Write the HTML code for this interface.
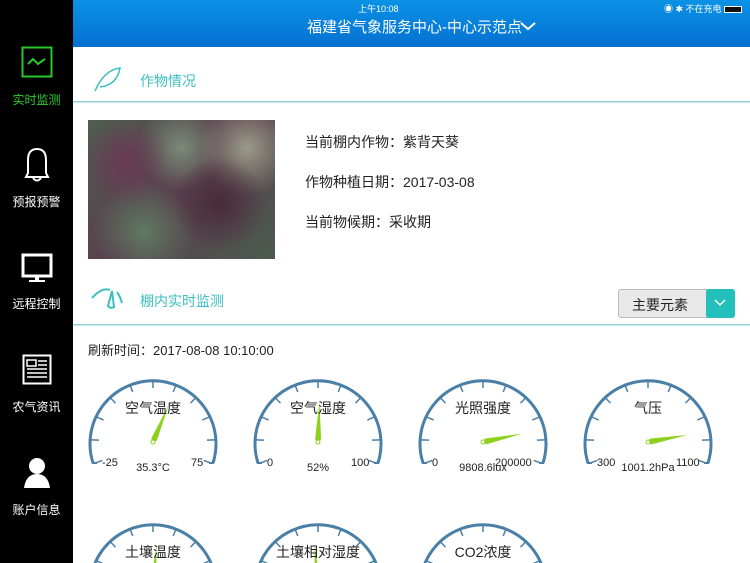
<!DOCTYPE html>
<html><head><meta charset="utf-8"><style>
*{margin:0;padding:0;box-sizing:border-box}
html,body{width:750px;height:563px;overflow:hidden}
body{background:#fff;font-family:"Liberation Sans","Noto Sans CJK SC",sans-serif;position:relative}
.side{position:absolute;left:0;top:0;width:73px;height:563px;background:#000}
.lab{position:absolute;left:0;width:73px;text-align:center;font-size:12px;color:#fff}
.hdr{position:absolute;left:73px;top:0;width:677px;height:47px;background:linear-gradient(#0a92e4,#0570d2)}
.t{position:absolute;white-space:nowrap}
</style></head><body>
<div class="side">
<svg width="73" height="563" style="position:absolute;left:0;top:0">
<rect x="22.5" y="47.5" width="29" height="29" fill="none" stroke="#28c828" stroke-width="2"/>
<path d="M28 64 L33 59 L38 64 L45 59" fill="none" stroke="#28c828" stroke-width="2"/>
<path d="M26 177 L28 173 L28 160 Q28 149 37 149 Q46 149 46 160 L46 173 L48 177 Z" fill="none" stroke="#fff" stroke-width="2"/>
<path d="M33 178 Q37 183 41 178" fill="none" stroke="#fff" stroke-width="2"/>
<rect x="23" y="255" width="28" height="21" fill="none" stroke="#fff" stroke-width="3"/>
<rect x="35" y="276" width="4" height="4" fill="#fff"/><rect x="29" y="280" width="16" height="2" fill="#fff"/>
<rect x="23.5" y="355.5" width="27" height="28" fill="none" stroke="#fff" stroke-width="2"/>
<rect x="27" y="360" width="9" height="6" fill="none" stroke="#fff" stroke-width="1.5"/>
<path d="M38 361H47M38 365H47M27 369H47M27 373H47M27 377H47" stroke="#fff" stroke-width="1.5"/>
<circle cx="37" cy="466" r="8" fill="#fff"/><path d="M24 488 Q26 474 37 474 Q48 474 50 488 Z" fill="#fff"/>
</svg>
<div class="lab" style="top:91px;color:#2bd02b">实时监测</div>
<div class="lab" style="top:193px">预报预警</div>
<div class="lab" style="top:295px">远程控制</div>
<div class="lab" style="top:398px">农气资讯</div>
<div class="lab" style="top:501px">账户信息</div>
</div>
<div class="hdr">
<div class="t" style="left:285px;top:2px;font-size:9px;color:#fff">上午10:08</div>
<div class="t" style="left:591px;top:2px;font-size:9px;color:#fff">◉ ✱ 不在充电 <span style="display:inline-block;width:18px;height:7px;background:#111;border:1px solid #fff;vertical-align:middle"></span></div>
<div class="t" style="left:234px;top:16px;font-size:15px;color:#fff">福建省气象服务中心-中心示范点</div>
<svg style="position:absolute;left:446px;top:20px" width="18" height="12"><path d="M2 3 L9 9 L16 3" fill="none" stroke="#fff" stroke-width="2"/></svg>
</div>
<svg width="750" height="563" style="position:absolute;left:0;top:0">
<path d="M95 91 Q104 70 120 68 Q117 85 100 87" fill="none" stroke="#3cbfc0" stroke-width="1.5"/>
<path d="M92 298 Q102 287 110 290 M112 291 L114 307 Q110 309 108 306 Z M117 292 Q120 296 122 303" fill="none" stroke="#3cbfc0" stroke-width="2"/>
<rect x="73" y="101" width="677" height="1.5" fill="#8fd3d8"/>
<rect x="73" y="324" width="677" height="1.5" fill="#8fd3d8"/>
</svg>
<div class="t" style="left:140px;top:71px;font-size:14px;color:#3cbfc0">作物情况</div>
<div class="t" style="left:140px;top:291px;font-size:14px;color:#3cbfc0">棚内实时监测</div>
<div style="position:absolute;left:88px;top:120px;width:187px;height:139px;background:
radial-gradient(circle at 20% 30%,#6a3a55 0,transparent 25%),radial-gradient(circle at 70% 60%,#4a2a3a 0,transparent 30%),radial-gradient(circle at 50% 20%,#7a8a78 0,transparent 30%),radial-gradient(circle at 30% 80%,#5e7a62 0,transparent 30%),radial-gradient(circle at 85% 20%,#9a9a88 0,transparent 25%),linear-gradient(135deg,#4e5e50,#5a3e4e 50%,#4a5c4e)"></div>
<div class="t" style="left:305px;top:132px;font-size:14px;color:#222">当前棚内作物：紫背天葵</div>
<div class="t" style="left:305px;top:172px;font-size:14px;color:#222">作物种植日期：2017-03-08</div>
<div class="t" style="left:305px;top:212px;font-size:14px;color:#222">当前物候期：采收期</div>
<div style="position:absolute;left:618px;top:289px;width:117px;height:29px;border:1px solid #bbb;border-radius:3px;background:#e8e8e8"></div>
<div class="t" style="left:632px;top:295px;font-size:14px;color:#222">主要元素</div>
<div style="position:absolute;left:706px;top:289px;width:29px;height:29px;background:#22bfbb;border-radius:3px"></div>
<svg style="position:absolute;left:713px;top:298px" width="14" height="10"><path d="M2 2 L7 7 L12 2" fill="none" stroke="#fff" stroke-width="1.5"/></svg>
<div class="t" style="left:88px;top:340px;font-size:13px;color:#222">刷新时间：2017-08-08 10:10:00</div>
<svg width="750" height="563" style="position:absolute;left:0;top:0" font-family="Liberation Sans, Noto Sans CJK SC, sans-serif">
<defs>
<g id="dial">
<path d="M-60 21 A63 63 0 1 1 60 21" fill="none" stroke="#4a7fa8" stroke-width="3"/>
<path d="M-61 21 h5 M61 21 h-5" stroke="#4a7fa8" stroke-width="2"/>
<g stroke="#4a7fa8" stroke-width="1.5">
<line x1="54" y1="0" x2="62" y2="0" transform="rotate(-200)"/>
<line x1="54" y1="0" x2="62" y2="0" transform="rotate(-178)"/>
<line x1="54" y1="0" x2="62" y2="0" transform="rotate(-156)"/>
<line x1="54" y1="0" x2="62" y2="0" transform="rotate(-134)"/>
<line x1="54" y1="0" x2="62" y2="0" transform="rotate(-112)"/>
<line x1="54" y1="0" x2="62" y2="0" transform="rotate(-90)"/>
<line x1="54" y1="0" x2="62" y2="0" transform="rotate(-68)"/>
<line x1="54" y1="0" x2="62" y2="0" transform="rotate(-46)"/>
<line x1="54" y1="0" x2="62" y2="0" transform="rotate(-24)"/>
<line x1="54" y1="0" x2="62" y2="0" transform="rotate(-2)"/>
<line x1="54" y1="0" x2="62" y2="0" transform="rotate(20)"/>
</g></g>
<g id="needle"><path d="M-2 0 L3 -3 L40 0 L3 3 Z" fill="#8ed01e"/><circle r="2" fill="#fff" stroke="#8ed01e"/></g>
</defs>
<g font-size="11" fill="#222">
<g transform="translate(153,442)"><use href="#dial"/><use href="#needle" transform="rotate(-67)"/>
<text y="-29" text-anchor="middle" font-size="14">空气温度</text><text x="-51" y="24">-25</text><text x="38" y="24">75</text><text y="29" text-anchor="middle">35.3°C</text></g>
<g transform="translate(318,442)"><use href="#dial"/><use href="#needle" transform="rotate(-88)"/>
<text y="-29" text-anchor="middle" font-size="14">空气湿度</text><text x="-51" y="24">0</text><text x="33" y="24">100</text><text y="29" text-anchor="middle">52%</text></g>
<g transform="translate(483,442)"><use href="#dial"/><use href="#needle" transform="rotate(-12)"/>
<text y="-29" text-anchor="middle" font-size="14">光照强度</text><text x="-51" y="24">0</text><text x="12" y="24">200000</text><text y="29" text-anchor="middle">9808.6lux</text></g>
<g transform="translate(648,442)"><use href="#dial"/><use href="#needle" transform="rotate(-10)"/>
<text y="-29" text-anchor="middle" font-size="14">气压</text><text x="-51" y="24">300</text><text x="28" y="24">1100</text><text y="29" text-anchor="middle">1001.2hPa</text></g>
<g transform="translate(153,586)"><use href="#dial"/><use href="#needle" transform="rotate(-85)"/><text y="-29" text-anchor="middle" font-size="14">土壤温度</text></g>
<g transform="translate(318,586)"><use href="#dial"/><use href="#needle" transform="rotate(-95)"/><text y="-29" text-anchor="middle" font-size="14">土壤相对湿度</text></g>
<g transform="translate(483,586)"><use href="#dial"/><text y="-29" text-anchor="middle" font-size="14">CO2浓度</text></g>
</g></svg>
</body></html>
